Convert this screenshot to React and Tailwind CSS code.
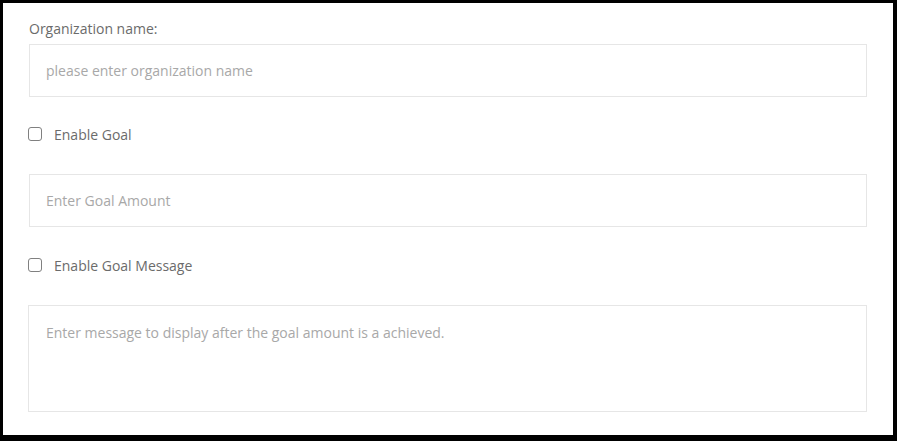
export default function App() {
  const font = { fontFamily: '"Open Sans", "Noto Sans", Arial, sans-serif' }
  return (
    <div
      style={font}
      className="box-border h-[441px] w-[897px] border-b-[6px] border-l-[3px] border-r-4 border-t-[3px] border-black bg-white px-[26px] pb-[23px] pt-[17px] text-[14px]"
    >
      <label className="block h-[18px] leading-[18px] text-[#6b6b6b]">Organization name:</label>
      <input
        type="text"
        placeholder="please enter organization name"
        className="mt-[6px] box-border block h-[53px] w-full border border-[#e6e6e6] px-[16px] text-[14px] text-[#333] outline-none placeholder:text-[#a8a8a8]"
      />

      <label className="mt-[27px] flex h-[20px] items-center gap-[12px] text-[#6b6b6b]">
        <span className="ml-[-1px] box-border h-[14px] w-[14px] rounded-[3px] border border-[#808080] bg-white" />
        Enable Goal
      </label>

      <input
        type="text"
        placeholder="Enter Goal Amount"
        className="mt-[30px] box-border block h-[53px] w-full border border-[#e6e6e6] px-[16px] text-[14px] text-[#333] outline-none placeholder:text-[#a8a8a8]"
      />

      <label className="mt-[28px] flex h-[20px] items-center gap-[12px] text-[#6b6b6b]">
        <span className="ml-[-1px] box-border h-[14px] w-[14px] rounded-[3px] border border-[#808080] bg-white" />
        Enable Goal Message
      </label>

      <textarea
        placeholder="Enter message to display after the goal amount is a achieved."
        className="mt-[30px] ml-[-1px] box-border block h-[107px] w-[calc(100%+1px)] resize-none border border-[#e6e6e6] px-[17px] pt-[18px] text-[14px] leading-[18px] text-[#333] outline-none placeholder:text-[#a8a8a8]"
      />
    </div>
  )
}
